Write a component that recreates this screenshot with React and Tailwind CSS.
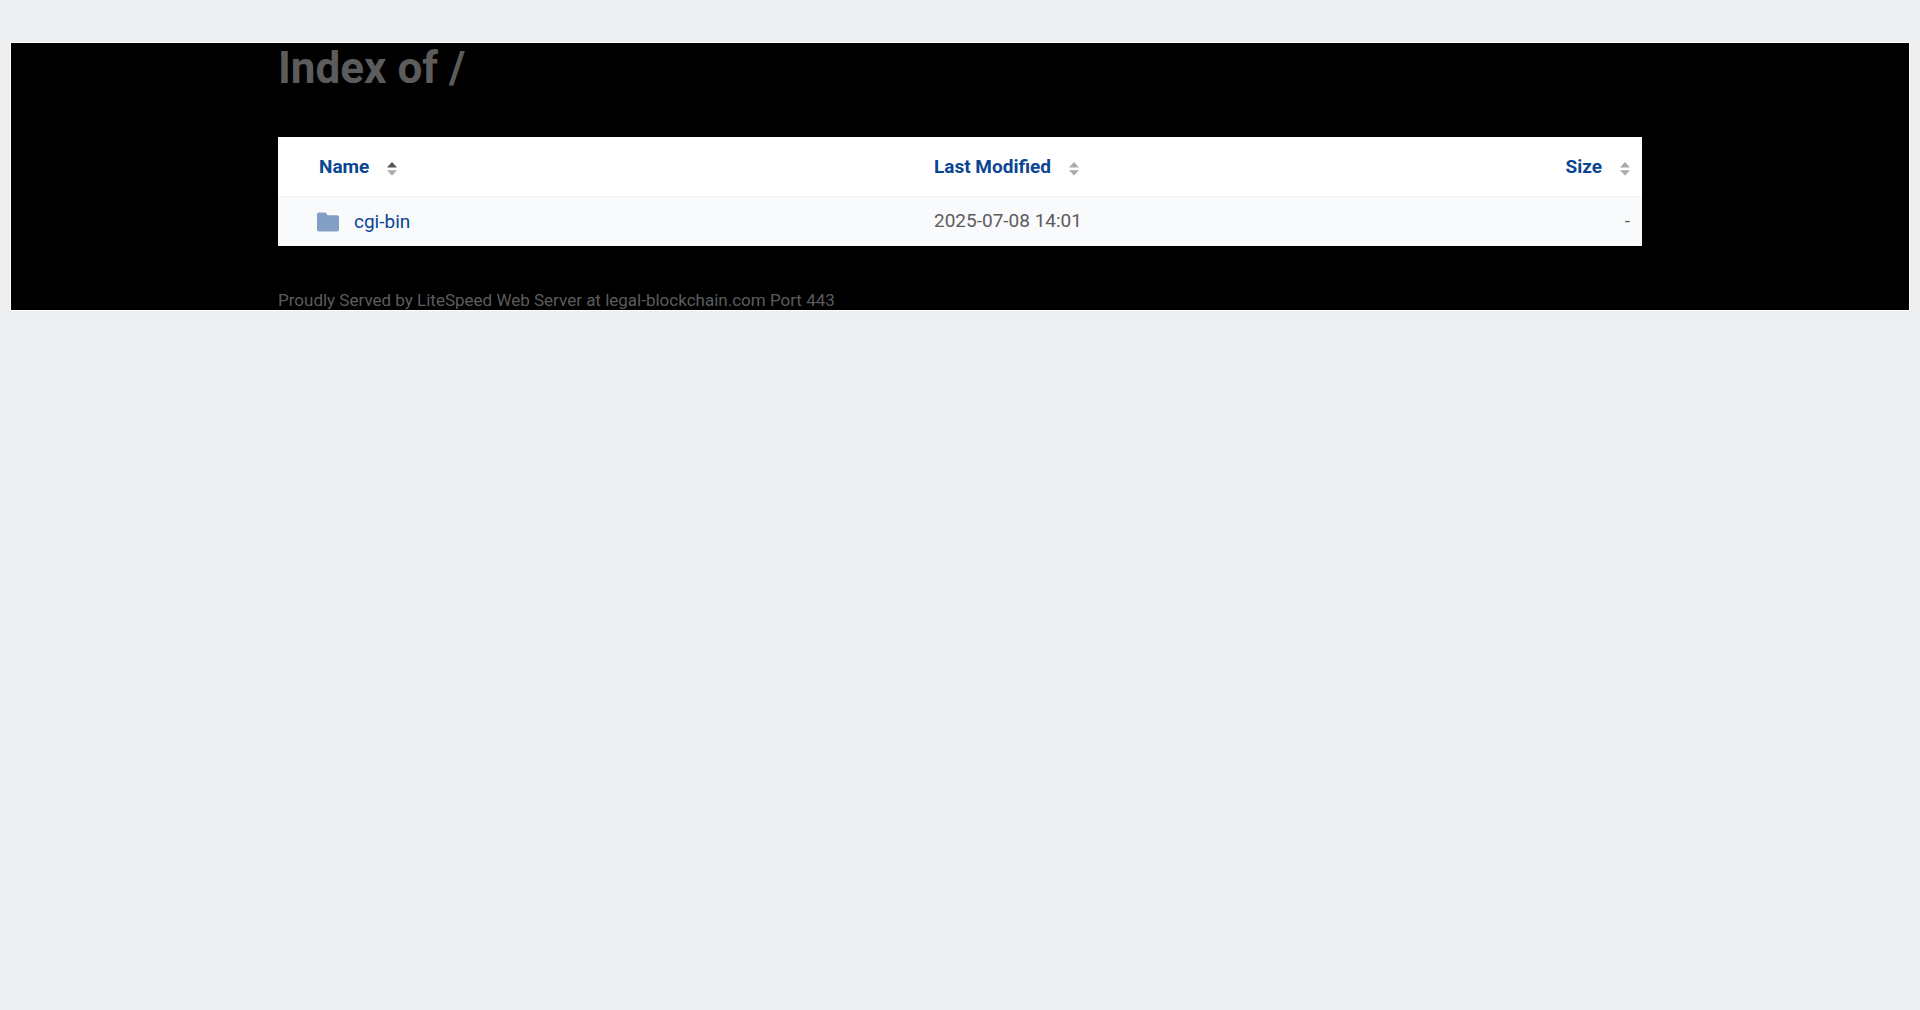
import React, { useState } from "react";

const columns = [
    { key: "name", label: "Name", cell: "w-[656px] pl-[41px] text-left" },
    { key: "modified", label: "Last Modified", cell: "text-left" },
    { key: "size", label: "Size", cell: "pr-3 text-right" },
];

const files = [{ name: "cgi-bin", href: "/cgi-bin/", modified: "2025-07-08 14:01", size: "-" }];

function SortArrows({ direction }) {
    return (
        <svg width="10" height="14" viewBox="0 0 10 14" className="mt-1" aria-hidden="true">
            <path d="M5 0L10 5.4H0z" fill={direction === "asc" ? "#555555" : "#aaaaaa"} />
            <path d="M0 8.2h10L5 13.6z" fill={direction === "desc" ? "#555555" : "#aaaaaa"} />
        </svg>
    );
}

function FolderIcon() {
    return (
        <svg width="22" height="20" viewBox="0 0 22 20" className="shrink-0" aria-hidden="true">
            <path d="M2 0.5h5.6c.7 0 1.2.3 1.6.8l1.4 1.9H20c1.1 0 2 .9 2 2v12.3c0 1.1-.9 2-2 2H2c-1.1 0-2-.9-2-2v-15c0-1.1.9-2 2-2z" fill="#839fc5" />
        </svg>
    );
}

export default function App() {
    const [sort, setSort] = useState({ key: "name", direction: "asc" });

    const toggleSort = (key) => {
        setSort((prev) => ({
            key,
            direction: prev.key === key && prev.direction === "asc" ? "desc" : "asc",
        }));
    };

    const rows = [...files].sort((a, b) => {
        const order = a[sort.key].localeCompare(b[sort.key]);
        return sort.direction === "asc" ? order : -order;
    });

    return (
        <div className="min-h-screen bg-[#edeef0] px-[10px] pt-[42px] font-['Roboto',sans-serif] text-[#5c5c5c]">
            <main className="border border-white bg-black">
                <div className="mx-auto w-full max-w-[1364px]">
                    <h1 className="pb-11 text-[44px] leading-[50px] font-bold">Index of /</h1>

                    <table className="w-full border-collapse bg-white text-[19px] leading-6">
                        <thead>
                            <tr className="h-[59px]">
                                {columns.map((col) => (
                                    <th key={col.key} className={`pt-[2px] font-medium ${col.cell}`}>
                                        <button
                                            type="button"
                                            onClick={() => toggleSort(col.key)}
                                            className="inline-flex items-center gap-[18px] font-bold text-[#0a4591]"
                                        >
                                            {col.label}
                                            <SortArrows direction={sort.key === col.key ? sort.direction : null} />
                                        </button>
                                    </th>
                                ))}
                            </tr>
                        </thead>
                        <tbody>
                            {rows.map((file) => (
                                <tr key={file.name} className="h-[50px] border-t border-[#f1f3f6] bg-[#f8fafc]">
                                    <td className="pl-[39px]">
                                        <a href={file.href} className="inline-flex items-center gap-[15px] align-middle text-[#0a4591]">
                                            <FolderIcon />
                                            {file.name}
                                        </a>
                                    </td>
                                    <td>{file.modified}</td>
                                    <td className="pr-3 text-right">{file.size}</td>
                                </tr>
                            ))}
                        </tbody>
                    </table>

                    <footer className="pt-11 text-[17px] leading-5">
                        Proudly Served by LiteSpeed Web Server at legal-blockchain.com Port 443
                    </footer>
                </div>
            </main>
        </div>
    );
}
